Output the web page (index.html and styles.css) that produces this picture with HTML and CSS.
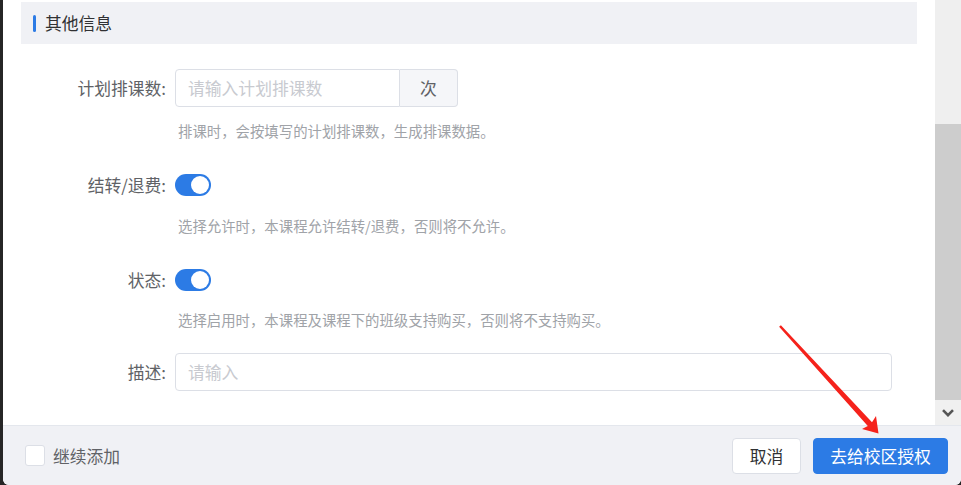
FILE: index.html
```html
<!DOCTYPE html>
<html lang="zh-CN">
<head>
<meta charset="utf-8">
<title>其他信息</title>
<link rel="stylesheet" href="styles.css">
</head>
<body>
<div class="dialog">
  <div class="main">
    <div class="content">
      <div class="section-head"><span class="bar"></span><span class="section-title">其他信息</span></div>
      <div class="form">
        <div class="row row-first">
          <div class="label">计划排课数:</div>
          <div class="input-group">
            <input class="input input-short" type="text" placeholder="请输入计划排课数">
            <div class="append">次</div>
          </div>
        </div>
        <div class="help help-input">排课时，会按填写的计划排课数，生成排课数据。</div>

        <div class="row row-next">
          <div class="label">结转/退费:</div>
          <div class="switch"><span class="knob"></span></div>
        </div>
        <div class="help help-switch">选择允许时，本课程允许结转/退费，否则将不允许。</div>

        <div class="row row-next">
          <div class="label">状态:</div>
          <div class="switch"><span class="knob"></span></div>
        </div>
        <div class="help help-switch2">选择启用时，本课程及课程下的班级支持购买，否则将不支持购买。</div>

        <div class="row row-last">
          <div class="label">描述:</div>
          <input class="input input-wide" type="text" placeholder="请输入">
        </div>
      </div>
    </div>
    <div class="scrollbar">
      <div class="sb-track"></div>
      <div class="sb-thumb"></div>
      <div class="sb-button">
        <svg width="12" height="8" viewBox="0 0 12 8"><path d="M1 1.2 L6 6.2 L11 1.2" fill="none" stroke="#555" stroke-width="2.6"/></svg>
      </div>
    </div>
  </div>
  <div class="footer">
    <label class="check"><span class="box"></span><span class="check-text">继续添加</span></label>
    <div class="spacer"></div>
    <button class="btn btn-default">取消</button>
    <button class="btn btn-primary">去给校区授权</button>
  </div>
</div>
<svg class="annotation" width="961" height="485" viewBox="0 0 961 485">
  <polygon points="780.9,325.2 872,422.3 876,416 878.5,433.5 862,429 867.8,426.1 779.1,326.8" fill="#f5221b"/>
</svg>
</body>
</html>
```

FILE: styles.css
```css
* { box-sizing: border-box; }

html, body {
  margin: 0;
  padding: 0;
  width: 961px;
  height: 485px;
  overflow: hidden;
}

body {
  background: #262626;
  font-family: "Noto Sans CJK SC", "Microsoft YaHei", sans-serif;
  color: #606266;
  position: relative;
}

.dialog {
  margin-left: 3px;
  width: 958px;
  height: 485px;
  background: #fff;
  border-radius: 0 0 6px 6px;
  overflow: hidden;
  display: flex;
  flex-direction: column;
}

.main {
  height: 425px;
  display: flex;
  flex: 0 0 425px;
}

.content {
  flex: 1;
  padding-top: 2px;
  overflow: hidden;
}

.section-head {
  margin: 0 18px;
  height: 42px;
  background: #f0f1f5;
  display: flex;
  align-items: center;
  padding-left: 12px;
}

.bar {
  width: 3px;
  height: 17px;
  border-radius: 2px;
  background: #2c7be5;
  margin-right: 9px;
}

.section-title {
  font-size: 16.8px;
  color: #303133;
  line-height: 1;
}

.form {
  padding: 0 43px 0 18px;
}

.row {
  display: flex;
  align-items: center;
  height: 38px;
}

.row-first { margin-top: 25px; }
.row-next { margin-top: 25px; }
.row-last { margin-top: 23px; }

.label {
  width: 154px;
  flex: 0 0 154px;
  text-align: right;
  padding-right: 9px;
  font-size: 16.8px;
  color: #606266;
  line-height: 38px;
}

.input-group {
  display: flex;
  width: 283px;
  height: 38px;
}

.input {
  height: 38px;
  border: 1px solid #dcdfe6;
  border-radius: 4px;
  padding: 0 12px;
  font-family: inherit;
  font-size: 16.8px;
  color: #606266;
  background: #fff;
  outline: none;
}

.input::placeholder { color: #c8cad0; }

.input-short {
  flex: 1;
  min-width: 0;
  border-radius: 4px 0 0 4px;
}

.input-wide {
  flex: 1;
}

.append {
  width: 58px;
  flex: 0 0 58px;
  border: 1px solid #dcdfe6;
  border-left: none;
  border-radius: 0 4px 4px 0;
  background: #f5f6f9;
  display: flex;
  align-items: center;
  justify-content: center;
  font-size: 16.8px;
  color: #606266;
}

.help {
  margin-left: 157px;
  font-size: 14.4px;
  line-height: 20px;
  color: #a0a3a8;
}

.help-input { margin-top: 14px; }
.help-switch { margin-top: 12px; }
.help-switch2 { margin-top: 11px; }

.switch {
  width: 36px;
  height: 22px;
  border-radius: 11px;
  background: #2c7be5;
  display: flex;
  align-items: center;
  justify-content: flex-end;
  padding-right: 2px;
}

.knob {
  width: 18px;
  height: 18px;
  border-radius: 50%;
  background: #fff;
}

.scrollbar {
  width: 26px;
  flex: 0 0 26px;
  display: flex;
  flex-direction: column;
  background: #f0f0f0;
}

.sb-track { flex: 0 0 124px; background: #efefef; }
.sb-thumb { flex: 1; background: #cdcdcd; }
.sb-button {
  flex: 0 0 25px;
  background: #f0f0f0;
  display: flex;
  align-items: center;
  justify-content: center;
}

.footer {
  flex: 1;
  border-top: 1px solid #e4e7ed;
  background: #f0f1f5;
  display: flex;
  align-items: center;
  padding: 0 13px 0 22px;
}

.check {
  display: flex;
  align-items: center;
}

.box {
  width: 20px;
  height: 21px;
  border: 1px solid #dcdfe6;
  border-radius: 3px;
  background: #fff;
  margin-right: 8px;
}

.check-text {
  font-size: 16.8px;
  color: #606266;
}

.spacer { flex: 1; }

.btn {
  height: 36px;
  border-radius: 4px;
  font-family: inherit;
  font-size: 16.8px;
  padding: 0;
  cursor: pointer;
}

.btn-default {
  width: 69px;
  border: 1px solid #dcdfe6;
  background: #fff;
  color: #303133;
  margin-right: 12px;
}

.btn-primary {
  width: 135px;
  border: 1px solid #2c7be5;
  background: #2c7be5;
  color: #fff;
}

.annotation {
  position: absolute;
  left: 0;
  top: 0;
  pointer-events: none;
}
```
